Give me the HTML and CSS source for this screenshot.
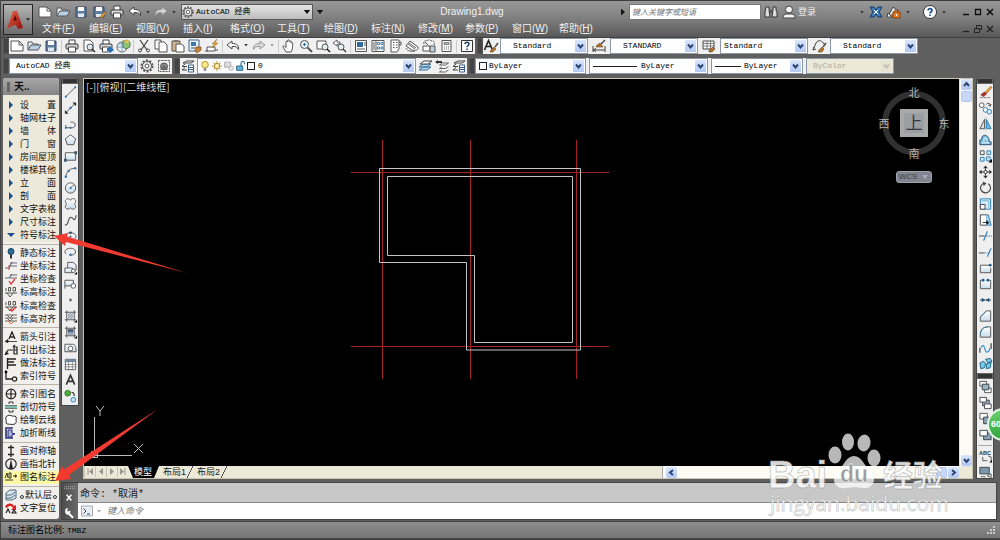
FILE: index.html
```html
<!DOCTYPE html>
<html lang="zh-CN">
<head>
<meta charset="utf-8">
<meta name="viewport" content="width=device-width, initial-scale=1">
<title>Drawing1.dwg</title>
<link rel="stylesheet" href="styles.css">
</head>
<body>
<svg class="sprite" aria-hidden="true">
  <defs>
    <linearGradient id="gBlue" x1="0" y1="0" x2="0" y2="1"><stop offset="0" stop-color="#fff"/><stop offset="1" stop-color="#c9dcec"/></linearGradient>
    <linearGradient id="gRed" x1="0" y1="0" x2="1" y2="1"><stop offset="0" stop-color="#f0654a"/><stop offset="1" stop-color="#8e0f0a"/></linearGradient>
  </defs>
  <!-- file and edit -->
  <symbol id="new" viewBox="0 0 16 16"><path d="M2 3h8l4 4v6H2z" fill="#fff" stroke="#555"/><path d="M10 3v4h4" fill="none" stroke="#555"/></symbol>
  <symbol id="open" viewBox="0 0 16 16"><path d="M2 12V4h4l1 2h5v2" fill="#e8eef4" stroke="#555"/><path d="M2 12l3-5h10l-3 5z" fill="#b9d2e6" stroke="#555"/></symbol>
  <symbol id="save" viewBox="0 0 16 16"><path d="M3 3h10v10H3z" fill="#5f7ea0" stroke="#33455c"/><path d="M5 3h6v4H5z" fill="#fff"/><path d="M5 9.500h6V13H5z" fill="#dfe8f0"/></symbol>
  <symbol id="saveas" viewBox="0 0 16 16"><path d="M3 3h10v10H3z" fill="#5f7ea0" stroke="#33455c"/><path d="M5 3h6v4H5z" fill="#fff"/><path d="M5 10h6v3H5z" fill="#dfe8f0"/><path d="M9 13l4-5 2 1-4 5z" fill="#e9a43c" stroke="#7a4b10" stroke-width=".6"/></symbol>
  <symbol id="print" viewBox="0 0 16 16"><path d="M5 6V2h6v4" fill="#fff" stroke="#444"/><rect x="2" y="6" width="12" height="5" rx="1" fill="#d9d9d9" stroke="#333"/><path d="M4.500 9h7v5h-7z" fill="#fff" stroke="#444"/></symbol>
  <symbol id="preview" viewBox="0 0 16 16"><path d="M3 2h6l3 3v8H3z" fill="#fff" stroke="#555"/><circle cx="9" cy="9" r="3" fill="#dcebf5" stroke="#555"/><path d="M11 11l3 3" stroke="#333" stroke-width="1.500"/></symbol>
  <symbol id="publish" viewBox="0 0 16 16"><use href="#print"/><path d="M9 10h3V8l4 4-4 3v-2H9z" fill="#2470b8"/></symbol>
  <symbol id="globe3d" viewBox="0 0 16 16"><circle cx="7" cy="9" r="5" fill="#eef5fa" stroke="#666"/><path d="M3 6h8M2 9h10M7 4v10" stroke="#5a8fb8" stroke-width=".8"/><path d="M8 3l4-1 3 2v5l-4 2-3-2z" fill="#8fc37a" stroke="#3f6d35" stroke-width=".8"/><path d="M8 3l4 2 3-1-3-2z" fill="#f0c050"/></symbol>
  <symbol id="cut" viewBox="0 0 16 16"><path d="M4 2l7 10M12 2L5 12" stroke="#444" stroke-width="1.300"/><circle cx="4" cy="12.500" r="1.500" fill="none" stroke="#444"/><circle cx="12" cy="12.500" r="1.500" fill="none" stroke="#444"/></symbol>
  <symbol id="copyc" viewBox="0 0 16 16"><path d="M2 2h6v9H2z" fill="#fff" stroke="#555"/><path d="M6 4h5l3 3v7H6z" fill="#fff" stroke="#555"/></symbol>
  <symbol id="paste" viewBox="0 0 16 16"><path d="M2 3h8v10H2z" fill="#d2b48c" stroke="#555"/><path d="M4 2h4v2H4z" fill="#777"/><path d="M6 6h5l3 2v6H6z" fill="#fff" stroke="#555"/></symbol>
  <symbol id="match" viewBox="0 0 16 16"><path d="M2 2h10v11H2z" fill="#eef4f8" stroke="#3f6489"/><path d="M4 4h5v4H4z" fill="#3f78ad"/><path d="M4 10h4" stroke="#444"/><path d="M9 9h5v3l-4 3-2-2z" fill="#c98237" stroke="#653b13" stroke-width=".6"/></symbol>
  <symbol id="blockedit" viewBox="0 0 16 16"><path d="M3 9h8v4H3z" fill="#fff" stroke="#555"/><path d="M1 13h3M11 12h3" stroke="#555"/><path d="M13 1l-5 5 3 0-3 4 6-5h-3z" fill="#efb13a" stroke="#8c5e10" stroke-width=".5"/></symbol>
  <symbol id="undo" viewBox="0 0 16 16"><path d="M2 7l5-4v2.500c5 0 7 2 6.500 6-1-2.500-3-3.300-6.500-3V11z" fill="#fff" stroke="#444"/></symbol>
  <symbol id="redo" viewBox="0 0 16 16"><path d="M14 7L9 3v2.500c-5 0-7 2-6.500 6 1-2.500 3-3.300 6.500-3V11z" fill="#d8d8d8" stroke="#999"/></symbol>
  <symbol id="pan" viewBox="0 0 16 16"><path d="M5 14L2 9c-.5-1 .7-1.500 1.500-.8L5 9.500V4c0-1.200 1.500-1.200 1.600 0V2.800c0-1.200 1.600-1.200 1.700 0V3.500c.1-1 1.600-1 1.700.1V5c.3-.9 1.600-.8 1.600.2 0 3.500.2 6-1.600 8.800z" fill="#fff" stroke="#444" stroke-width=".9"/></symbol>
  <symbol id="zoomrt" viewBox="0 0 16 16"><circle cx="6.500" cy="6.500" r="4" fill="#e4eff6" stroke="#555"/><path d="M5 6.500h3M6.500 5v3" stroke="#2c6aa0"/><path d="M9.500 9.500L14 14" stroke="#555" stroke-width="2"/></symbol>
  <symbol id="zoomwin" viewBox="0 0 16 16"><path d="M2 3h9v8H2z" fill="#fff" stroke="#555"/><circle cx="10" cy="9" r="3" fill="#e4eff6" stroke="#555"/><path d="M12 11l3 3" stroke="#222" stroke-width="1.600"/></symbol>
  <symbol id="zoomprev" viewBox="0 0 16 16"><path d="M1 5l4-3v2h3v2H5v2z" fill="#fff" stroke="#555" stroke-width=".9"/><circle cx="9" cy="9" r="3" fill="#e4eff6" stroke="#555"/><path d="M11 11l3 3" stroke="#444" stroke-width="1.600"/></symbol>
  <symbol id="props" viewBox="0 0 16 16"><path d="M2.500 2.500h11v11h-11z" fill="#fff" stroke="#555"/><path d="M4 4h6v5H4z" fill="#316a9f"/><path d="M4 11h8M11 5h2M11 7h2" stroke="#555"/></symbol>
  <symbol id="dcenter" viewBox="0 0 16 16"><path d="M2 2.500h12v11H2z" fill="#fff" stroke="#555"/><path d="M6 3v10" stroke="#555"/><path d="M3 5h2M3 7h2M3 9h2M3 11h2" stroke="#555"/><path d="M7.500 4.500h2v2h-2zM11 4.500h2v2h-2zM7.500 9h2v2h-2zM11 9h2v2h-2z" fill="none" stroke="#3b76a8" stroke-width=".9"/></symbol>
  <symbol id="palette" viewBox="0 0 16 16"><path d="M4 2h8v9l-2 3H4z" fill="#fff" stroke="#555"/><path d="M6 4.500h1.500M9 4.500h1.500M6 7h1.500M9 7h1.500M6 9.500h1.500M9 9.500h1.500M12 4h2v3h-2" stroke="#555" fill="none"/></symbol>
  <symbol id="sheets" viewBox="0 0 16 16"><path d="M2 8l4-5 8 6c1 3-3 4-6 3z" fill="#fff" stroke="#555"/><path d="M2 10c1 3 6 4 9 3M4 6l7 5M5 5l7 5" fill="none" stroke="#555" stroke-width=".9"/></symbol>
  <symbol id="markup" viewBox="0 0 16 16"><path d="M3 6c-1-3 2-4 3-3 2-2 4-1 4 0 3-1 4 2 3 4" fill="none" stroke="#555" stroke-dasharray="2 1"/><path d="M2 8h7v5H2z" fill="#fff" stroke="#555"/><path d="M9 8h5v6H9z" fill="#bcd2e4" stroke="#555"/><path d="M4 4l3 3" stroke="#555"/></symbol>
  <symbol id="calc" viewBox="0 0 16 16"><path d="M4 2.500h9v11H4z" fill="#f7f7f7" stroke="#555"/><path d="M6 4.500h5v2H6z" fill="#a6b7c6" stroke="#555" stroke-width=".6"/><path d="M6 9h5M6 11h5" stroke="#777" stroke-dasharray="1 1"/></symbol>
  <symbol id="help" viewBox="0 0 16 16"><path d="M2.500 2.500h11v11h-11z" fill="#fff" stroke="#333"/><path d="M6 6c0-2.500 4-2.500 4 0 0 1.500-2 1.500-2 3.200M8 10.500V12" fill="none" stroke="#1d3a63" stroke-width="1.500"/></symbol>
  <symbol id="tstyle" viewBox="0 0 16 16"><path d="M1.500 12L5.500 2.500 9.500 12M3 8.500h5" fill="none" stroke="#222" stroke-width="1.600"/><path d="M8 12l3-3 2 2-3 3H7z" fill="#b3722f" stroke="#5d3710" stroke-width=".5"/><path d="M12 9l3-4" stroke="#444" stroke-width="1.400"/></symbol>
  <symbol id="dstyle" viewBox="0 0 16 16"><path d="M2 8v6M14 8v6M2 12h12M2 12l3-1.500M2 12l3 1.500" stroke="#444"/><path d="M6 7l3-2 3 4H5z" fill="#b3722f" stroke="#5d3710" stroke-width=".5"/><path d="M10 6l4-4" stroke="#444" stroke-width="1.500"/></symbol>
  <symbol id="tblstyle" viewBox="0 0 16 16"><path d="M2 3h11v8H2z" fill="#fff" stroke="#444"/><path d="M2 5.500h11M2 8h11M6 3v8M9.500 3v8" stroke="#666" stroke-width=".8"/><path d="M8 12l4-3 2 2-3 3H8z" fill="#b3722f" stroke="#5d3710" stroke-width=".5"/></symbol>
  <symbol id="mlstyle" viewBox="0 0 16 16"><path d="M2 12l3-7c2-4 7-2 8 1M2 12l1-3M2 12l3-1" fill="none" stroke="#444"/><path d="M8 12l3-3 2 2-2 3H7z" fill="#b3722f" stroke="#5d3710" stroke-width=".5"/><path d="M12 9l3-4" stroke="#444" stroke-width="1.400"/></symbol>
  <symbol id="gear" viewBox="0 0 16 16"><circle cx="8" cy="8" r="5.500" fill="none" stroke="#555" stroke-width="2" stroke-dasharray="2 1.450"/><circle cx="8" cy="8" r="4.500" fill="#eee" stroke="#555"/><circle cx="8" cy="8" r="2" fill="#fff" stroke="#555"/></symbol>
  <symbol id="wsset" viewBox="0 0 16 16"><rect x="2.500" y="2.500" width="11" height="11" fill="none" stroke="#555" stroke-dasharray="2 1"/><circle cx="8" cy="8.500" r="3.500" fill="#888" stroke="#555"/><path d="M4 12l4-5 4 5z" fill="#666"/></symbol>
  <!-- layers -->
  <symbol id="layers" viewBox="0 0 16 16"><path d="M3 5l4-2h7l-3 2z" fill="#fff" stroke="#444"/><path d="M7 8.500H2L5 6M7 12H2l3-2.500" fill="none" stroke="#444"/><path d="M8.500 7h5v7h-5z" fill="#fff" stroke="#3a5d80"/><path d="M9 9.500h4M9 11.500h4" stroke="#3a5d80"/></symbol>
  <symbol id="laymake" viewBox="0 0 16 16"><path d="M2 12l4-3h8l-4 3zM2 9l4-3h8l-4 3z" fill="#b5dbf0" stroke="#3b6f96"/><path d="M3 6l4-3h8l-4 3z" fill="#fff" stroke="#444"/></symbol>
  <symbol id="layprev" viewBox="0 0 16 16"><path d="M5.500 7l3-2h6l-3 2zM5.500 10.500l2-1.500M11.500 10.500l3-2M5.500 10.500h6M5.500 14l2-1.500M5.500 14h6l3-2" fill="#fff" stroke="#555" stroke-width=".9"/><path d="M1 4l3-2v1h4v2H4v1z" fill="#333"/></symbol>
  <symbol id="bulb" viewBox="0 0 12 16"><circle cx="6" cy="6.500" r="3.800" fill="#fbe88e" stroke="#b38b1d"/><path d="M4.500 10.500h3v3h-3z" fill="#888"/></symbol>
  <symbol id="sun" viewBox="0 0 12 16"><path d="M6 2v12M0 8h12M2 4l8 8M10 4l-8 8" stroke="#b8862b"/><circle cx="6" cy="8" r="3" fill="#fff2a5" stroke="#a07c1a"/></symbol>
  <symbol id="vp" viewBox="0 0 12 16"><path d="M1 3.500h7v6H1z" fill="#ddd" stroke="#aaa"/><circle cx="8.500" cy="10.500" r="2.500" fill="#eee" stroke="#aaa"/></symbol>
  <symbol id="lock" viewBox="0 0 12 16"><path d="M6 8V5c0-3 4-3 4 0v1" fill="none" stroke="#356f9e" stroke-width="1.300"/><path d="M1 8h7v5H1z" fill="#64b5d9" stroke="#245c84"/></symbol>
  <!-- draw -->
  <symbol id="line" viewBox="0 0 16 16"><path d="M3 13L13 3" stroke="#555"/><circle cx="3" cy="13" r="1.200" fill="#3b76a8"/><circle cx="13" cy="3" r="1.200" fill="#3b76a8"/></symbol>
  <symbol id="xline" viewBox="0 0 16 16"><path d="M3 13L13 3" stroke="#444"/><path d="M2 14v-4l4 4zM14 2v4l-4-4z" fill="#333"/><circle cx="8" cy="8" r="1.300" fill="#3b76a8"/></symbol>
  <symbol id="pline" viewBox="0 0 16 16"><path d="M3 12h7c4 0 4-6 0-6H8" fill="none" stroke="#555"/><path d="M3 9v3" stroke="#555"/><circle cx="3" cy="12" r="1.200" fill="#3b76a8"/><circle cx="8" cy="12" r="1.200" fill="#3b76a8"/></symbol>
  <symbol id="poly" viewBox="0 0 16 16"><path d="M8 2.500l5.500 4-2 6.500h-7l-2-6.500z" fill="url(#gBlue)" stroke="#555"/></symbol>
  <symbol id="rect" viewBox="0 0 16 16"><path d="M2.500 4.500h11v8h-11z" fill="url(#gBlue)" stroke="#555"/><path d="M12 3h3v3h-3zM1 11h3v3H1z" fill="#3d5a75"/></symbol>
  <symbol id="arc" viewBox="0 0 16 16"><path d="M3 14c0-6 4-10 10-10" fill="none" stroke="#555"/><circle cx="3" cy="13" r="1.300" fill="#3b76a8"/><circle cx="6" cy="7" r="1.300" fill="#3b76a8"/><circle cx="13" cy="4" r="1.300" fill="#3b76a8"/></symbol>
  <symbol id="circle" viewBox="0 0 16 16"><circle cx="8" cy="8" r="5.500" fill="url(#gBlue)" stroke="#555"/><path d="M8 8l3.500-3.500" stroke="#555"/><circle cx="8" cy="8" r="1.200" fill="#3b76a8"/></symbol>
  <symbol id="cloud" viewBox="0 0 16 16"><path d="M8 4c1-3 6-2 5.500 1.500C13.300 7 12 8 12 8c3 2 1 6-1.500 5.500C9 13.500 8 12 8 12c-2 3-6 1-5.500-1.500C2.700 9 4 8 4 8 1 6 3 2 5.500 2.500 7 2.700 8 4 8 4z" fill="url(#gBlue)" stroke="#555"/></symbol>
  <symbol id="spline" viewBox="0 0 16 16"><path d="M2 13c2 1 3-1 4-5s4-3 5-1 3-1 3-4" fill="none" stroke="#555" stroke-width="1.200"/></symbol>
  <symbol id="ellipse" viewBox="0 0 16 16"><ellipse cx="8" cy="8.500" rx="6" ry="4" fill="url(#gBlue)" stroke="#555"/><circle cx="8" cy="4.500" r="1.400" fill="#345"/><circle cx="8" cy="8.500" r="1" fill="#345"/></symbol>
  <symbol id="earc" viewBox="0 0 16 16"><path d="M3 10C0 6 5 4 8 4c6 0 7 5 3 7H8" fill="none" stroke="#555"/><circle cx="8" cy="11" r="1.400" fill="#3b76a8"/></symbol>
  <symbol id="insert" viewBox="0 0 16 16"><path d="M5 2h6l3 3v5H5z" fill="#eef" stroke="#555"/><path d="M2 8h8v5H2z" fill="url(#gBlue)" stroke="#555"/><circle cx="11" cy="11" r="2" fill="#fff" stroke="#555"/><path d="M15 12v3h-3z"/></symbol>
  <symbol id="block" viewBox="0 0 16 16"><path d="M2 4h9v6H2z" fill="url(#gBlue)" stroke="#555"/><circle cx="11" cy="10" r="2.500" fill="#fff" stroke="#555"/><path d="M2 10v3" stroke="#555"/></symbol>
  <symbol id="point" viewBox="0 0 16 16"><circle cx="8" cy="8" r="1.500" fill="#667"/></symbol>
  <symbol id="hatch" viewBox="0 0 16 16"><path d="M2 4h12M2 12h12M4 2v12M12 2v12" stroke="#555"/><path d="M5 5h6v6H5z" fill="#cdd6de"/><path d="M5 8l3-3M5 11l6-6M8 11l3-3" stroke="#567" stroke-width=".8"/><path d="M15 12v3h-3z"/></symbol>
  <symbol id="grad" viewBox="0 0 16 16"><path d="M2 4h12M2 12h12M4 2v12M12 2v12" stroke="#555"/><path d="M5 5h6v6H5z" fill="#8fa1b2"/><path d="M5 5h6v3H5z" fill="#4b6175"/><path d="M15 12v3h-3z"/></symbol>
  <symbol id="region" viewBox="0 0 16 16"><path d="M2 4h8c3 0 4 3 4 8H2z" fill="url(#gBlue)" stroke="#555"/><circle cx="8" cy="8.500" r="2.500" fill="#fff" stroke="#555"/></symbol>
  <symbol id="table" viewBox="0 0 16 16"><path d="M2.500 3h11v11h-11z" fill="#fff" stroke="#555"/><path d="M2 3h12v3H2z" fill="#6f8aa3"/><path d="M2.500 8.500h11M2.500 11h11M6 5v9M10 5v9" stroke="#777" stroke-width=".8"/></symbol>
  <symbol id="mtext" viewBox="0 0 16 16"><path d="M3.500 13L8 3l4.500 10M5.500 9.500h5" fill="none" stroke="#333" stroke-width="1.700"/></symbol>
  <symbol id="addsel" viewBox="0 0 16 16"><circle cx="5" cy="5" r="3" fill="#4caf3e" stroke="#2c6f24"/><path d="M9 4c2 0 3 1 3 4" stroke="#333" fill="none" stroke-width="1.300"/><circle cx="11" cy="12" r="2.500" fill="#c6e2f4" stroke="#2f7fb5"/></symbol>
  <!-- modify -->
  <symbol id="erase" viewBox="0 0 16 16"><path d="M2 14h12" stroke="#777" stroke-dasharray="3 1"/><path d="M7 9l6-7 2 1-6 7z" fill="#e7a04a" stroke="#8c5a1c" stroke-width=".6"/><path d="M3 11l4-3 2 2-3 3z" fill="#a33" stroke="#711" stroke-width=".6"/></symbol>
  <symbol id="copy" viewBox="0 0 16 16"><circle cx="4" cy="5" r="2.500" fill="#fff" stroke="#555"/><path d="M9 4c2-2 4-1 4 1M13 6l-2-1M13 6l1-2" fill="none" stroke="#333"/><circle cx="8" cy="10" r="2.500" fill="#fff" stroke="#2f7fb5"/><circle cx="12" cy="12" r="2.500" fill="#d6ebf7" stroke="#2f7fb5"/></symbol>
  <symbol id="mirror" viewBox="0 0 16 16"><path d="M7 3v10H2z" fill="#ddd" stroke="#555"/><path d="M9 3v10h5z" fill="#6cb8e0" stroke="#2f7fb5"/><path d="M8 1v14" stroke="#999" stroke-dasharray="2 1" stroke-width=".7"/></symbol>
  <symbol id="offset" viewBox="0 0 16 16"><path d="M2 13h12v-3h-2c0-9-9-9-8-2H2z" fill="#7cc0e4" stroke="#2a4a66"/><path d="M4 11h8M6 9c0-4 4-4 4 0" fill="none" stroke="#fff"/></symbol>
  <symbol id="array" viewBox="0 0 16 16"><path d="M2.500 2.500h4v4h-4z" fill="#fff" stroke="#444"/><path d="M9.500 2.500h4v4h-4zM2.500 9.500h4v4h-4z" fill="#cde8f6" stroke="#2f7fb5"/><path d="M9 9h4v4H9z" fill="#cde8f6" stroke="#2f7fb5"/><path d="M15 11v4h-4z"/></symbol>
  <symbol id="move" viewBox="0 0 16 16"><path d="M8 1l2.500 3h-5zM8 15l2.500-3h-5zM1 8l3-2.500v5zM15 8l-3-2.500v5z" fill="#333"/><path d="M8 4v8M4 8h8" stroke="#333"/><circle cx="8" cy="8" r="1.700" fill="#fff" stroke="#333"/></symbol>
  <symbol id="rotate" viewBox="0 0 16 16"><path d="M6 3a5.300 5.300 0 1 0 5 .5" fill="none" stroke="#444" stroke-width="1.200"/><path d="M5 1l4 2-3 3z" fill="#444"/></symbol>
  <symbol id="scale" viewBox="0 0 16 16"><path d="M2.500 2.500h11v11h-11z" fill="#d5ecf8" stroke="#2f7fb5"/><path d="M2.500 8.500h5v5h-5z" fill="#fff" stroke="#444"/><path d="M4 4.500h7.500V12" fill="none" stroke="#6eb5dc"/></symbol>
  <symbol id="stretch" viewBox="0 0 16 16"><path d="M9 2.500h2l3 11H9z" fill="#a6d8f0" stroke="#2f7fb5"/><path d="M9 2.500H2.500v11H9" fill="#fff" stroke="#444"/><path d="M5 10h4V8l3 3-3 2v-2H5z"/></symbol>
  <symbol id="trim" viewBox="0 0 16 16"><path d="M6 13L10 3" stroke="#2f7fb5" stroke-width="1.200"/><path d="M1 8h6" stroke="#444"/><path d="M8 8h7" stroke="#2f7fb5" stroke-dasharray="2 1"/></symbol>
  <symbol id="extend" viewBox="0 0 16 16"><path d="M10 13L14 4" stroke="#2f7fb5" stroke-width="1.200"/><path d="M1 9h6" stroke="#444"/><path d="M7 9h5" stroke="#2f7fb5" stroke-dasharray="1 1"/></symbol>
  <symbol id="brkpt" viewBox="0 0 16 16"><path d="M12 5H2.500v8h11V8" fill="url(#gBlue)" stroke="#555"/><circle cx="13" cy="5" r="1.500" fill="#1d5e96"/></symbol>
  <symbol id="brk" viewBox="0 0 16 16"><path d="M5 4H2.500v9h11V4H11" fill="url(#gBlue)" stroke="#555"/><circle cx="5.500" cy="4" r="1.500" fill="#1d5e96"/><circle cx="10.500" cy="4" r="1.500" fill="#1d5e96"/></symbol>
  <symbol id="join" viewBox="0 0 16 16"><path d="M2 8h12" stroke="#444"/><path d="M4 5.500L7.500 8 4 10.500zM12 5.500L8.500 8l3.500 2.500z" fill="#1d4e76"/></symbol>
  <symbol id="chamfer" viewBox="0 0 16 16"><path d="M2.500 13.500V9l6.500-6.500h4.500v11z" fill="url(#gBlue)" stroke="#555"/><path d="M2.500 9L9 2.500" stroke="#2f7fb5"/></symbol>
  <symbol id="fillet" viewBox="0 0 16 16"><path d="M2.500 13.500V11c0-5 3-8.500 8-8.500h3v11z" fill="url(#gBlue)" stroke="#555"/><path d="M2.500 11c0-5 3-8.500 8-8.500" fill="none" stroke="#2f7fb5"/></symbol>
  <symbol id="blend" viewBox="0 0 16 16"><path d="M2 13V8M14 9V3" stroke="#444" stroke-width="1.300"/><path d="M3 8c3-6 4 0 5 3s4 1 5-3" fill="none" stroke="#2f8fcf" stroke-width="1.200"/></symbol>
  <symbol id="explode" viewBox="0 0 16 16"><path d="M2 7l4-2 2 2-1 5-4 1zM8 3l5-1 2 3-4 2zM9 8l5-2-1 6-4 1z" fill="#7cc8e8" stroke="#1b6287"/></symbol>
  <symbol id="front" viewBox="0 0 16 16"><path d="M2 2h7v5H2zM7 9h7v5H7z" fill="#fff" stroke="#555"/><path d="M4.500 5h7v6h-7z" fill="#9fb4c6" stroke="#344"/></symbol>
  <symbol id="back" viewBox="0 0 16 16"><path d="M5 5h7v6H5z" fill="#9fb4c6" stroke="#344"/><path d="M2 2h7v5H2zM7 9h7v5H7z" fill="#fff" stroke="#445"/></symbol>
  <symbol id="above" viewBox="0 0 16 16"><path d="M2 2h8v6H2z" fill="#fff" stroke="#555"/><path d="M6 6h8v7H6z" fill="#8ba2b6" stroke="#344"/></symbol>
  <symbol id="under" viewBox="0 0 16 16"><path d="M6 6h8v7H6z" fill="#8ba2b6" stroke="#344"/><path d="M2 3h8v6H2z" fill="#fff" stroke="#344"/></symbol>
  <symbol id="hatchback" viewBox="0 0 16 16"><path d="M2 3h10v7H2z" fill="#7e97ac" stroke="#344"/><path d="M3 13h5M10 12l4-2v4z" stroke="#555" fill="#fff"/></symbol>
  <!-- palette commands -->
  <symbol id="tri" viewBox="0 0 14 12"><path d="M5 2l4 4-4 4z" fill="#1f4e8c"/></symbol>
  <symbol id="trid" viewBox="0 0 14 12"><path d="M3 4h8L7 8z" fill="#1f4e8c"/></symbol>
  <symbol id="p-bulb" viewBox="0 0 14 12"><circle cx="7" cy="4.500" r="3" fill="#2d6f9c" stroke="#163c58"/><path d="M6 8h2v3.500H6z" fill="#333"/></symbol>
  <symbol id="p-coord" viewBox="0 0 14 12"><path d="M1 8h4l3-6M6 3h7M6 6h7" fill="none" stroke="#667" stroke-width="1.100"/><path d="M5 5v5" stroke="#b44"/></symbol>
  <symbol id="p-coordc" viewBox="0 0 14 12"><path d="M1 5h4l3-4M6 2h7M6 5h7" fill="none" stroke="#667" stroke-width="1.100"/><path d="M5 8l2 3 4-5" fill="none" stroke="#d33" stroke-width="1.300"/></symbol>
  <symbol id="p-elev" viewBox="0 0 14 12"><path d="M2 2v3M4.500 1.500h2v3.500h-2zM9 1.500h2.500v3.500H9zM1 7h12M3 7l3 4 3-4" fill="none" stroke="#444" stroke-width=".9"/></symbol>
  <symbol id="p-elevc" viewBox="0 0 14 12"><path d="M2 2v3M4.500 1.500h2v3.500h-2zM9 1.500h2.500v3.500H9zM1 7h12M3 7l3 4 3-4" fill="none" stroke="#444" stroke-width=".9"/><path d="M6 9l2 2 4-4" fill="none" stroke="#d33" stroke-width="1.400"/></symbol>
  <symbol id="p-align" viewBox="0 0 14 12"><path d="M1 2h12M1 5h12M1 8h12M3 2l3 3 3-3M3 5l3 3 3-3" fill="none" stroke="#555" stroke-width=".9"/><path d="M4 8l3 3 3-3" fill="none" stroke="#d63"/></symbol>
  <symbol id="p-arrow" viewBox="0 0 14 12"><path d="M5 8l3-7 3 7M6 6h4" fill="none" stroke="#222" stroke-width="1.300"/><path d="M3 10.500h10M1 10.500l3-2v3z" stroke="#222" fill="#222" stroke-width=".8"/></symbol>
  <symbol id="p-lead" viewBox="0 0 14 12"><path d="M1 11l3-5h5M10 3h3v7h-3zM10 6h3M9 3l2-2" fill="none" stroke="#222" stroke-width="1.200"/><path d="M1 11l1-4 3 3z" fill="#222"/></symbol>
  <symbol id="p-make" viewBox="0 0 14 12"><path d="M3.500 1v11M3 2h9M3 5h7M3 8h9" stroke="#222" stroke-width="1.400"/></symbol>
  <symbol id="p-index" viewBox="0 0 14 12"><path d="M2 1v8h6" fill="none" stroke="#222" stroke-width="1.300"/><circle cx="10.500" cy="9" r="2.200" fill="none" stroke="#222" stroke-width="1.200"/><circle cx="2" cy="2" r="1.400"/></symbol>
  <symbol id="p-cross" viewBox="0 0 14 12"><circle cx="7" cy="6" r="4.800" fill="none" stroke="#222" stroke-width="1.200"/><path d="M2 6h10M7 1v10" stroke="#222" stroke-width="1.200"/></symbol>
  <symbol id="p-cut" viewBox="0 0 14 12"><path d="M1 6h12" stroke="#7fbfae" stroke-width="3"/><path d="M1 4.500h12M1 7.500h12" stroke="#555" stroke-width=".7"/><path d="M5 3V1h4v2M5 9v2h4V9" fill="none" stroke="#333"/></symbol>
  <symbol id="p-cloud" viewBox="0 0 14 12"><path d="M3 2c3-2 5 1 8 0 2 1 1 3 1 4 1 3-1 3-1 4-3 1-5 0-8 0-2-1 0-3-1-4 0-1-1-3 1-4z" fill="#fff" stroke="#333"/></symbol>
  <symbol id="p-brk" viewBox="0 0 14 12"><path d="M9 1H2v10h7" fill="none" stroke="#2a2f77" stroke-width="1.600"/><path d="M4 3h4v3l3 1-3 1v2H4z" fill="#a9b1d8" stroke="#2a2f77"/></symbol>
  <symbol id="p-sym" viewBox="0 0 14 12"><path d="M7 0v12M4 2.500h6M4 9.500h6" stroke="#222" stroke-width="1.300"/></symbol>
  <symbol id="p-north" viewBox="0 0 14 12"><circle cx="7" cy="6" r="5.200" fill="none" stroke="#222" stroke-width="1.200"/><path d="M7 1l2 10H5z" fill="#222"/></symbol>
  <symbol id="p-name" viewBox="0 0 14 12"><path d="M1 7l2-5 1 5M5 2v5h2V2zM1 9h8M9 5h4" fill="none" stroke="#333"/><path d="M11 3l2 2-2 2z" fill="#333"/></symbol>
  <symbol id="p-layer" viewBox="0 0 14 12"><path d="M2 4l4-3h6v8l-4 2H2z" fill="#dce6ee" stroke="#4d6980"/><path d="M2 6h5l4-3M2 9h5l4-3" fill="none" stroke="#4d6980"/></symbol>
  <symbol id="p-reset" viewBox="0 0 14 12"><path d="M1 5c1-4 7-5 9-1l2-1v5H7l2-2C7 3 4 4 3 6z" fill="#d22"/><path d="M2 11l2-4 2 4M8 11l2-3 2 3z" fill="none" stroke="#222" stroke-width="1.200"/></symbol>
</svg>

<div class="app">
  <header class="titlebar">
    <button class="logo" type="button" aria-label="应用程序菜单">
      <svg class="logo-mark" viewBox="0 0 18 20"><path d="M1 19L7 1h4l6 17-5 1-2-4c-3 0-5 2-9 4z" fill="url(#gRed)"/><path d="M7 11l2-6 2 5z" fill="#5c0a06"/></svg>
      <span class="caret"></span>
    </button>
    <div class="title-main">
      <div class="title-row">
        <div class="quick">
          <button type="button" aria-label="新建"><svg class="ico"><use href="#new"/></svg></button>
          <button type="button" aria-label="打开"><svg class="ico"><use href="#open"/></svg></button>
          <button type="button" aria-label="保存"><svg class="ico"><use href="#save"/></svg></button>
          <button type="button" aria-label="另存为"><svg class="ico"><use href="#saveas"/></svg></button>
          <button type="button" aria-label="打印"><svg class="ico"><use href="#print"/></svg></button>
          <button type="button" aria-label="放弃"><svg class="ico"><use href="#undo"/></svg></button>
          <span class="caret"></span>
          <button type="button" aria-label="重做"><svg class="ico"><use href="#redo"/></svg></button>
          <span class="caret"></span>
          <div class="combo combo-title">
            <select aria-label="工作空间"><option>AutoCAD 经典</option></select>
            <svg class="ico combo-lead"><use href="#gear"/></svg>
            <span class="caret big"></span>
          </div>
          <span class="caret big"></span>
        </div>
        <h1 class="doc">Drawing1.dwg</h1>
        <div class="info">
          <span class="play"></span>
          <input class="search" type="text" placeholder="键入关键字或短语" aria-label="搜索">
          <button type="button" aria-label="查找"><svg class="ico" viewBox="0 0 16 16"><path d="M3 3h3v3l1 7H2V8zM10 3h3v3l1 2v5H9l1-7z" fill="#ddd" stroke="#333"/><path d="M7 6h2v3H7z" fill="#555"/></svg></button>
          <button class="login" type="button"><svg class="ico" viewBox="0 0 16 16"><circle cx="8" cy="5.500" r="3.500" fill="#f4f4f4" stroke="#444"/><path d="M2 14c0-4 3-4 6-4s6 0 6 4z" fill="#f4f4f4" stroke="#444"/></svg>登录</button>
          <span class="caret gap"></span>
          <button type="button" aria-label="Exchange"><svg class="ico" viewBox="0 0 16 16"><path d="M2 3h4l2 3 2-3h4l-3 5 3 5h-4l-2-3-2 3H2l3-5z" fill="#3e7fc1" stroke="#163a66"/><path d="M6 6l4 4M10 6l-4 4" stroke="#fff"/></svg></button>
          <button type="button" aria-label="联机"><svg class="ico" viewBox="0 0 16 16"><path d="M2 12l5-9 5 4" fill="#ddd" stroke="#444"/><path d="M2 9l4 4H1z" fill="#fff" stroke="#444"/><path d="M7 8h7v6H7z" fill="#e8791e" stroke="#8c3f05"/><path d="M9 8V6h3v2" fill="none" stroke="#8c3f05"/><path d="M10 10h1v2h-1z" fill="#fff"/></svg></button>
          <span class="caret"></span>
          <button class="helpbtn" type="button" aria-label="帮助"><svg class="ico" viewBox="0 0 16 16"><circle cx="8" cy="8" r="6.500" fill="#fff" stroke="#333"/><path d="M6 6.500c0-2.500 4-2.500 4 0 0 1.500-2 1.500-2 3M8 10.500V12" fill="none" stroke="#1c4f94" stroke-width="1.700"/></svg></button>
          <span class="caret"></span>
          <div class="winbtns">
            <button type="button" aria-label="最小化"><svg viewBox="0 0 8 8"><path d="M1 6.500h6" stroke="#111" stroke-width="1.500"/></svg></button>
            <button type="button" aria-label="最大化"><svg viewBox="0 0 8 8"><path d="M1.500 1.500h5v5h-5z" fill="none" stroke="#111" stroke-width="1.300"/></svg></button>
            <button type="button" aria-label="关闭"><svg viewBox="0 0 8 8"><path d="M1 1l6 6M7 1L1 7" stroke="#111" stroke-width="1.600"/></svg></button>
          </div>
        </div>
      </div>
      <div class="menu-row">
        <nav class="menu">
          <a href="#">文件(<u>F</u>)</a><a href="#">编辑(<u>E</u>)</a><a href="#">视图(<u>V</u>)</a><a href="#">插入(<u>I</u>)</a><a href="#">格式(<u>O</u>)</a><a href="#">工具(<u>T</u>)</a><a href="#">绘图(<u>D</u>)</a><a href="#">标注(<u>N</u>)</a><a href="#">修改(<u>M</u>)</a><a href="#">参数(<u>P</u>)</a><a href="#">窗口(<u>W</u>)</a><a href="#">帮助(<u>H</u>)</a>
        </nav>
        <div class="winbtns">
          <button type="button" aria-label="最小化图形"><svg viewBox="0 0 8 8"><path d="M1 6.500h6" stroke="#222" stroke-width="1.300"/></svg></button>
          <button type="button" aria-label="还原图形"><svg viewBox="0 0 8 8"><path d="M2.500 3V.5h5v4H5.500M.5 3.500h5v4h-5z" fill="none" stroke="#222"/></svg></button>
          <button type="button" aria-label="关闭图形"><svg viewBox="0 0 8 8"><path d="M1 1l6 6M7 1L1 7" stroke="#222" stroke-width="1.400"/></svg></button>
        </div>
      </div>
    </div>
  </header>

  <div class="bar">
    <div class="grip"></div>
    <div class="tools w-std">
      <svg class="ico"><use href="#new"/></svg><svg class="ico"><use href="#open"/></svg><svg class="ico"><use href="#save"/></svg><i class="sep"></i>
      <svg class="ico"><use href="#print"/></svg><svg class="ico"><use href="#preview"/></svg><svg class="ico"><use href="#publish"/></svg><svg class="ico"><use href="#globe3d"/></svg><i class="sep"></i>
      <svg class="ico"><use href="#cut"/></svg><svg class="ico"><use href="#copyc"/></svg><svg class="ico"><use href="#paste"/></svg><svg class="ico"><use href="#match"/></svg><svg class="ico"><use href="#blockedit"/></svg><i class="sep"></i>
      <svg class="ico"><use href="#undo"/></svg><span class="caret"></span><svg class="ico"><use href="#redo"/></svg><span class="caret dim"></span><i class="sep"></i>
      <svg class="ico"><use href="#pan"/></svg><svg class="ico"><use href="#zoomrt"/></svg><svg class="ico"><use href="#zoomwin"/></svg><svg class="ico"><use href="#zoomprev"/></svg><i class="sep"></i>
      <svg class="ico"><use href="#props"/></svg><svg class="ico"><use href="#dcenter"/></svg><svg class="ico"><use href="#palette"/></svg><svg class="ico"><use href="#sheets"/></svg><svg class="ico"><use href="#markup"/></svg><svg class="ico"><use href="#calc"/></svg><i class="sep"></i>
      <svg class="ico"><use href="#help"/></svg>
    </div>
    <div class="grip"></div>
    <div class="tools">
      <svg class="ico"><use href="#tstyle"/></svg>
      <div class="combo w-style inset"><select aria-label="文字样式"><option>Standard</option></select><svg class="chev" viewBox="0 0 11 12"><path d="M3 4.500l2.500 3 2.500-3"/></svg></div>
      <svg class="ico mid"><use href="#dstyle"/></svg>
      <div class="combo w-style inset"><select aria-label="标注样式"><option>STANDARD</option></select><svg class="chev" viewBox="0 0 11 12"><path d="M3 4.500l2.500 3 2.500-3"/></svg></div>
      <svg class="ico mid"><use href="#tblstyle"/></svg>
      <div class="combo w-style"><select aria-label="表格样式"><option>Standard</option></select><svg class="chev" viewBox="0 0 11 12"><path d="M3 4.500l2.500 3 2.500-3"/></svg></div>
      <svg class="ico mid"><use href="#mlstyle"/></svg>
      <div class="combo w-style inset"><select aria-label="多重引线样式"><option>Standard</option></select><svg class="chev" viewBox="0 0 11 12"><path d="M3 4.500l2.500 3 2.500-3"/></svg></div>
    </div>
  </div>

  <div class="bar">
    <div class="grip"></div>
    <div class="tools w-ws">
      <div class="combo w-space"><select aria-label="工作空间"><option>AutoCAD 经典</option></select><svg class="chev" viewBox="0 0 11 12"><path d="M3 4.500l2.500 3 2.500-3"/></svg></div>
      <svg class="ico"><use href="#gear"/></svg><svg class="ico"><use href="#wsset"/></svg>
    </div>
    <div class="grip"></div>
    <div class="tools w-layer">
      <svg class="ico"><use href="#layers"/></svg>
      <div class="combo w-layers">
        <select aria-label="图层"><option>0</option></select>
        <span class="layer-state"><svg><use href="#bulb"/></svg><svg><use href="#sun"/></svg><svg><use href="#vp"/></svg><svg><use href="#lock"/></svg><i class="swatch"></i></span>
        <svg class="chev" viewBox="0 0 11 12"><path d="M3 4.500l2.500 3 2.500-3"/></svg>
      </div>
      <svg class="ico"><use href="#laymake"/></svg><svg class="ico"><use href="#layprev"/></svg><svg class="ico"><use href="#layers"/></svg>
    </div>
    <div class="grip"></div>
    <div class="tools props">
      <div class="combo w-color"><select aria-label="颜色"><option>ByLayer</option></select><i class="swatch"></i><svg class="chev" viewBox="0 0 11 12"><path d="M3 4.500l2.500 3 2.500-3"/></svg></div>
      <div class="combo w-ltype"><select aria-label="线型"><option>ByLayer</option></select><i class="rule"></i><svg class="chev" viewBox="0 0 11 12"><path d="M3 4.500l2.500 3 2.500-3"/></svg></div>
      <div class="combo w-lweight"><select aria-label="线宽"><option>ByLayer</option></select><i class="rule"></i><svg class="chev" viewBox="0 0 11 12"><path d="M3 4.500l2.500 3 2.500-3"/></svg></div>
      <div class="combo w-plot"><select aria-label="打印样式" disabled><option>ByColor</option></select><svg class="chev" viewBox="0 0 11 12"><path d="M3 4.500l2.500 3 2.500-3"/></svg></div>
    </div>
  </div>

  <main class="body">
    <aside class="palette">
      <div class="palette-head"><i></i>天..</div>
      <div class="group g11">
        <button type="button"><svg><use href="#tri"/></svg><span class="wide">设 置</span></button>
        <button type="button"><svg><use href="#tri"/></svg><span>轴网柱子</span></button>
        <button type="button"><svg><use href="#tri"/></svg><span class="wide">墙 体</span></button>
        <button type="button"><svg><use href="#tri"/></svg><span class="wide">门 窗</span></button>
        <button type="button"><svg><use href="#tri"/></svg><span>房间屋顶</span></button>
        <button type="button"><svg><use href="#tri"/></svg><span>楼梯其他</span></button>
        <button type="button"><svg><use href="#tri"/></svg><span class="wide">立 面</span></button>
        <button type="button"><svg><use href="#tri"/></svg><span class="wide">剖 面</span></button>
        <button type="button"><svg><use href="#tri"/></svg><span>文字表格</span></button>
        <button type="button"><svg><use href="#tri"/></svg><span>尺寸标注</span></button>
        <button type="button"><svg><use href="#trid"/></svg><span>符号标注</span></button>
      </div>
      <div class="group g6">
        <button type="button"><svg><use href="#p-bulb"/></svg><span>静态标注</span></button>
        <button type="button"><svg><use href="#p-coord"/></svg><span>坐标标注</span></button>
        <button type="button"><svg><use href="#p-coordc"/></svg><span>坐标检查</span></button>
        <button type="button"><svg><use href="#p-elev"/></svg><span>标高标注</span></button>
        <button type="button"><svg><use href="#p-elevc"/></svg><span>标高检查</span></button>
        <button type="button"><svg><use href="#p-align"/></svg><span>标高对齐</span></button>
      </div>
      <div class="group g4">
        <button type="button"><svg><use href="#p-arrow"/></svg><span>箭头引注</span></button>
        <button type="button"><svg><use href="#p-lead"/></svg><span>引出标注</span></button>
        <button type="button"><svg><use href="#p-make"/></svg><span>做法标注</span></button>
        <button type="button"><svg><use href="#p-index"/></svg><span>索引符号</span></button>
      </div>
      <div class="group g4">
        <button type="button"><svg><use href="#p-cross"/></svg><span>索引图名</span></button>
        <button type="button"><svg><use href="#p-cut"/></svg><span>剖切符号</span></button>
        <button type="button"><svg><use href="#p-cloud"/></svg><span>绘制云线</span></button>
        <button type="button"><svg><use href="#p-brk"/></svg><span>加折断线</span></button>
      </div>
      <div class="group g3">
        <button type="button"><svg><use href="#p-sym"/></svg><span>画对称轴</span></button>
        <button type="button"><svg><use href="#p-north"/></svg><span>画指北针</span></button>
        <button class="hot" type="button"><svg><use href="#p-name"/></svg><span>图名标注</span></button>
      </div>
      <div class="group g2">
        <button type="button"><svg><use href="#p-layer"/></svg><span class="dots"><i></i>默认层<i></i></span></button>
        <button type="button"><svg><use href="#p-reset"/></svg><span>文字复位</span></button>
      </div>
    </aside>

    <div class="work">
      <div class="stage">
        <div class="vbars left">
          <div class="vgrip"></div>
          <div class="vtools">
            <svg><use href="#line"/></svg><svg><use href="#xline"/></svg><svg><use href="#pline"/></svg><svg><use href="#poly"/></svg><svg><use href="#rect"/></svg><svg><use href="#arc"/></svg><svg><use href="#circle"/></svg><svg><use href="#cloud"/></svg><svg><use href="#spline"/></svg><svg><use href="#ellipse"/></svg><svg><use href="#earc"/></svg><svg><use href="#insert"/></svg><svg><use href="#block"/></svg><svg><use href="#point"/></svg><svg><use href="#hatch"/></svg><svg><use href="#grad"/></svg><svg><use href="#region"/></svg><svg><use href="#table"/></svg><svg><use href="#mtext"/></svg><svg><use href="#addsel"/></svg>
          </div>
        </div>

        <section class="frame">
          <div class="canvas">
            <div class="view-label">[-][俯视][二维线框]</div>
            <svg class="plan" viewBox="84 80 875 387" fill="none">
              <path d="M382.500 141v239M470.500 141v239M576.500 141v239M351 173.500h258M351 347.500h258" stroke="#a32222"/>
              <path d="M379.500 169.500h201v181.500h-114v-87.500h-87zM387.500 177.500h185v166h-98v-87h-87z" stroke="#c4c4c4"/>
            </svg>
            <svg class="ucs" viewBox="0 0 60 56" fill="none" stroke="#bbb">
              <path d="M5.500 12v40M5 50.500h38M2.500 46.500h6v6h-6z"/>
              <path d="M7 1l4 5 4-5M11 6v5M45 39l9 9M54 39l-9 9"/>
            </svg>
            <div class="viewcube">
              <svg class="cube" viewBox="0 0 76 76">
                <circle cx="38" cy="38" r="29" fill="none" stroke="#303030" stroke-width="6"/>
                <path d="M24 24h28v28H24z" fill="#a9a9a9"/><path d="M28 28h20v20H28z" fill="#9c9ea2"/>
                <g fill="#b5b5b5" font-family="Liberation Sans, Noto Sans CJK SC, sans-serif" font-size="11" text-anchor="middle">
                  <text x="38" y="12">北</text><text x="38" y="73">南</text><text x="8" y="43">西</text><text x="68" y="43">东</text>
                  <text x="38" y="44" font-size="17" fill="#333a44">上</text>
                </g>
              </svg>
              <button class="wcs" type="button">WCS<svg viewBox="0 0 8 6"><path d="M1 1h6L4 5z" fill="#a9abb6"/></svg></button>
            </div>
          </div>
          <div class="vscroll">
            <span class="sbtn"><svg viewBox="0 0 11 11"><path d="M3 7l2.500-3L8 7"/></svg></span>
            <span class="sthumb"></span>
            <span class="sbtn end"><svg viewBox="0 0 11 11"><path d="M3 4l2.500 3L8 4"/></svg></span>
          </div>
          <div class="tabs">
            <svg class="nav" viewBox="0 0 44 11"><path d="M.5 0v11M11.500 0v11M22.500 0v11M33.500 0v11" stroke="#c8c4b4"/><path d="M9 2v7L5 5.500zM19 2v7l-4-3.500zM26 2v7l4-3.500zM36 2v7l4-3.500z" fill="#9a978c"/><path d="M4 2v7M41 2v7" stroke="#9a978c"/></svg>
            <button class="tab on" type="button">模型</button>
            <button class="tab" type="button">布局1</button>
            <button class="tab" type="button">布局2</button>
            <div class="hscroll">
              <span class="sbtn"><svg viewBox="0 0 11 11"><path d="M7 3L4 5.500 7 8"/></svg></span>
              <span class="sthumb end"></span>
              <span class="sbtn"><svg viewBox="0 0 11 11"><path d="M4 3l3 2.500L4 8"/></svg></span>
            </div>
          </div>
          <div class="corner"></div>
        </section>

        <div class="vbars right">
          <div class="vgrip"></div>
          <div class="vtools">
            <svg><use href="#erase"/></svg><svg><use href="#copy"/></svg><svg><use href="#mirror"/></svg><svg><use href="#offset"/></svg><svg><use href="#array"/></svg><svg><use href="#move"/></svg><svg><use href="#rotate"/></svg><svg><use href="#scale"/></svg><svg><use href="#stretch"/></svg><svg><use href="#trim"/></svg><svg><use href="#extend"/></svg><svg><use href="#brkpt"/></svg><svg><use href="#brk"/></svg><svg><use href="#join"/></svg><svg><use href="#chamfer"/></svg><svg><use href="#fillet"/></svg><svg><use href="#blend"/></svg><svg><use href="#explode"/></svg>
          </div>
          <div class="vgrip"></div>
          <div class="vtools last">
            <svg><use href="#front"/></svg><svg><use href="#back"/></svg><svg><use href="#above"/></svg><svg><use href="#under"/></svg><i class="hsep"></i><svg viewBox="0 0 16 16"><text x="1" y="7" font-size="6" font-weight="700" fill="#333">ABC</text><path d="M5 9v4h5M11 8l3 1v4" fill="none" stroke="#555"/><path d="M15 12v3h-3z"/></svg><svg><use href="#hatchback"/></svg>
          </div>
        </div>
      </div>

      <section class="command">
        <div class="cmd-side">
          <svg viewBox="0 0 15 38"><path d="M2 4h11M2 6h11" stroke="#bbb" stroke-dasharray="1 1"/><path d="M4.500 12.500l5 6M9.500 12.500l-5 6" stroke="#fff" stroke-width="1.600"/><path d="M3 29c0-2 2-3 3-2l-1 2 1 1 2-1c1 1 0 2 0 3l4 4-1.500 1.500-4-4c-2 0-4-1-3.500-4.500z" fill="#fff"/></svg>
        </div>
        <div class="cmd-main">
          <div class="cmd-log">命令: *取消*</div>
          <div class="cmd-line">
            <svg class="prompt" viewBox="0 0 12 12"><path d="M.5 1h11v10H.5z" fill="#e9edf4" stroke="#aab"/><path d="M2.500 3.500L5 6 2.500 8.500M6 9h3" fill="none" stroke="#345"/></svg>
            <span class="caret dim"></span>
            <input type="text" placeholder="键入命令" aria-label="命令行">
          </div>
        </div>
      </section>
    </div>
  </main>

  <footer class="status">
    <span>标注图名比例: <code>TMBZ</code></span>
    <svg class="resize" viewBox="0 0 10 10"><path d="M7 1h2v2H7zM4 4h2v2H4zM7 4h2v2H7zM1 7h2v2H1zM4 7h2v2H4zM7 7h2v2H7z" fill="#ccc"/></svg>
  </footer>

  <svg class="pointers" viewBox="0 0 190 265" aria-hidden="true">
    <path d="M54 16l14-3-1 3.500L187 53 66 22l-1 4z" fill="#f23a30"/>
    <path d="M55 261l7-15 2 3.500L158 189 69 255l2 4z" fill="#f23a30"/>
  </svg>
  <svg class="mark" viewBox="0 0 180 86" aria-hidden="true">
    <g fill="#fff" fill-opacity=".72">
      <ellipse cx="67" cy="23" rx="6.500" ry="8.500"/><ellipse cx="80" cy="10" rx="6" ry="8.500"/><ellipse cx="96" cy="11" rx="6.500" ry="8.500" transform="rotate(10 96 11)"/><ellipse cx="106" cy="26" rx="6.500" ry="8.500"/>
      <path d="M86 24c8 0 10 10 17 16 7 8 1 18-9 16-5-1-11-1-16 0-10 2-16-8-9-16 7-6 9-16 17-16z"/>
    </g>
    <g font-family="Liberation Sans, Noto Sans CJK SC, sans-serif" font-weight="700" fill="#fff" fill-opacity=".85" stroke="#999" stroke-opacity=".6" stroke-width=".8">
      <text x="0" y="56" font-size="38">Bai</text>
      <text x="72" y="50" font-size="23" fill="#888" stroke="#fff">du</text>
      <text x="115" y="54" font-size="30">经验</text>
    </g>
    <text x="2" y="79" font-family="Open Sans, Liberation Sans, sans-serif" font-size="21" fill="#fff" fill-opacity=".85" stroke="#aaa" stroke-opacity=".6" stroke-width=".8">jingyan.baidu.com</text>
  </svg>
  <div class="bubble">60</div>
</div>
</body>
</html>
```

FILE: styles.css
```css
* { box-sizing: border-box; }

body {
  margin: 0;
  background: #5f5f5f;
  color: #222;
  font-family: "Liberation Sans", "Noto Sans CJK SC", sans-serif;
  font-size: 10px;
  line-height: 12px;
  overflow: hidden;
}

button {
  display: flex;
  align-items: center;
  border: 0;
  padding: 0;
  background: none;
  color: inherit;
  font: inherit;
}

input, select { font: inherit; color: inherit; }
svg { display: block; flex: none; }
.sprite { position: absolute; width: 0; height: 0; }
.ico { width: 16px; height: 16px; }

.app {
  position: relative;
  display: flex;
  flex-direction: column;
  min-height: 100vh;
  overflow: hidden;
  border-left: 1px solid #444;
  border-bottom: 2px solid #444;
}

.caret {
  flex: none;
  width: 8px;
  height: 3px;
  background: #333;
  clip-path: polygon(25% 0, 75% 0, 50% 100%);
}
.caret.big { height: 4px; clip-path: polygon(10% 0, 90% 0, 50% 100%); background: #111; }
.caret.dim { background: #999; }

/* title bar */
.titlebar {
  display: flex;
  gap: 4px;
  padding: 3px 5px 0 2px;
  border-top: 1px solid #3c3c3c;
  border-bottom: 1px solid #3f3f3f;
  background: linear-gradient(#989898, #7e7e7e 50%, #585858);
}
.logo {
  width: 30px;
  height: 31px;
  padding-left: 2px;
  border: 1px solid #262626;
  background: linear-gradient(#b5b5b5, #6d6d6d);
}
.logo-mark { width: 18px; height: 20px; }
.title-main { flex: 1; min-width: 0; }
.title-row, .menu-row { display: flex; justify-content: space-between; align-items: center; }
.title-row { height: 16px; }
.menu-row { height: 17px; }
.quick { display: flex; align-items: center; gap: 2px; }
.quick .caret { margin: 0 -1px; }
.doc { margin: 0; color: #f2f2f2; font-size: 10px; font-weight: 400; }
.info { display: flex; align-items: center; gap: 2px; }
.play { width: 4px; height: 7px; margin-right: 2px; background: #111; clip-path: polygon(0 0, 100% 50%, 0 100%); }
.search {
  width: 132px;
  height: 16px;
  padding: 0 2px;
  border: 1px solid #777;
  background: #fff;
  font-size: 8px;
  font-style: italic;
}
.search::placeholder, .cmd-line input::placeholder { color: #777; opacity: 1; }
.info .login { gap: 1px; color: #eee; font-size: 9px; }
.info .gap { margin-left: 40px; }
.helpbtn { margin-left: 8px; }
.info .winbtns { margin-left: 12px; }
.winbtns { display: flex; gap: 4px; padding-right: 1px; }
.winbtns svg { width: 8px; height: 8px; }
.menu { display: flex; padding-left: 5px; }
.menu a { width: 47px; color: #f0f0f0; text-decoration: none; white-space: nowrap; }

/* combo boxes */
.combo { display: grid; flex: none; height: 16px; align-items: center; }
.combo > * { grid-area: 1 / 1; }
.combo select {
  appearance: none;
  width: 100%;
  height: 16px;
  padding: 0 14px 0 3px;
  border: 1px solid #8a97a8;
  border-radius: 0;
  background: #fff;
  color: #000;
  font-family: "Liberation Mono", "Noto Sans CJK SC", monospace;
  font-size: 8px;
}
.combo select:disabled { background: #ece9d8; color: #aaa79a; opacity: 1; }
.chev {
  justify-self: end;
  width: 11px;
  height: 12px;
  margin-right: 2px;
  background: linear-gradient(#dbe6fd, #b2c8f4);
  pointer-events: none;
}
.chev path, .sbtn path { fill: none; stroke: #2c4470; stroke-width: 2; }
.combo select:disabled ~ .chev { background: #e6e3d4; }
.combo select:disabled ~ .chev path { stroke: #c5c2b4; }
.combo.inset select { padding-left: 12px; }
.combo-title { width: 132px; margin-left: 2px; }
.combo-title select { padding-left: 14px; border-color: #555; background: linear-gradient(#e4e4e4, #bdbdbd); }
.combo-title .ico { width: 14px; }
.combo-title .caret { justify-self: end; margin-right: 2px; }
.quick .combo-title + .caret { margin-left: 1px; }
.w-style { width: 88px; }
.w-space { width: 129px; }
.w-space select { padding-left: 6px; }
.w-layers { width: 219px; }
.w-layers select { padding-left: 60px; }
.layer-state { display: flex; align-items: center; padding-left: 2px; pointer-events: none; }
.layer-state svg { width: 12px; height: 14px; }
.swatch { width: 8px; height: 8px; border: 1px solid #222; background: #fff; pointer-events: none; }
.w-color { width: 111px; }
.w-color select { padding-left: 13px; }
.w-color .swatch { margin-left: 4px; }
.w-ltype { width: 119px; }
.w-ltype select { padding-left: 51px; }
.w-lweight { width: 92px; }
.w-lweight select { padding-left: 32px; }
.rule { width: 44px; height: 1px; margin-left: 4px; background: #222; pointer-events: none; }
.w-lweight .rule { width: 26px; }
.w-plot { width: 88px; }
.w-plot select { padding-left: 6px; }

/* toolbars */
.bar { display: flex; padding-left: 2px; margin-bottom: 4px; }
.grip { flex: none; width: 6px; height: 16px; border: 1px solid #555; background: #444; }
.tools {
  display: flex;
  flex: none;
  align-items: center;
  gap: 1px;
  height: 16px;
  margin-right: 2px;
  background: #f0f0f0;
}
.w-std { width: 466px; }
.w-std .caret { margin-top: -2px; }
.sep { width: 1px; height: 13px; margin: 0 1px; background: #ccc; }
.mid { margin: 0 2px; }
.tools.props { gap: 3px; }

/* body */
.body { display: flex; flex: 1; min-height: 0; padding: 0 3px 1px 2px; }
.palette {
  display: flex;
  flex-direction: column;
  flex: none;
  width: 56px;
  margin-bottom: 1px;
  padding-bottom: 4px;
  border-radius: 3px;
  background: #f1f0ed;
  color: #111;
  font-size: 9px;
}
.palette-head {
  display: flex;
  align-items: center;
  gap: 4px;
  height: 17px;
  padding: 0 4px;
  border-radius: 3px 3px 0 0;
  background: linear-gradient(#a8a8a8, #858585);
  color: #111;
  font-size: 10px;
  font-weight: 700;
}
.palette-head i { width: 3px; height: 10px; background: #666; }
.group { display: flex; flex-direction: column; flex-basis: 0; }
.group + .group { padding-top: 2px; margin-top: 2px; border-top: 1px solid #bab7a8; }
.group button { flex: 1 1 0; gap: 2px; width: 100%; padding-left: 1px; line-height: 12px; white-space: nowrap; }
.group button svg { width: 14px; height: 12px; }
.group .wide { width: 36px; text-align-last: justify; }
.g11 { flex-grow: 11; padding-top: 3px; background: #ece9da; }
.g6 { flex-grow: 6; }
.g4 { flex-grow: 4; }
.g3 { flex-grow: 3; }
.g2 { flex-grow: 2; }
.group .hot { background: #fdf8a2; }
.dots { display: flex; align-items: center; gap: 1px; }
.dots i { width: 4px; height: 4px; margin-top: 4px; border: 1px solid #333; border-radius: 50%; }

.work { display: flex; flex: 1; flex-direction: column; min-width: 0; gap: 3px; padding-left: 2px; }
.stage { display: flex; flex: 1; min-height: 0; gap: 3px; }
.vbars {
  display: flex;
  flex: none;
  flex-direction: column;
  align-self: flex-start;
  width: 18px;
  border: 1px solid #444;
  border-top: 0;
}
.vbars.left { margin-right: 1px; }
.vbars.right { align-self: stretch; margin-right: 3px; height: 0; min-height: 100%; overflow: hidden; }
.vgrip { flex: none; height: 6px; border: 1px solid #666; background: #333; }
.vtools { display: flex; flex: none; flex-direction: column; align-items: center; padding: 0 0 1px; background: #efefef; }
.vtools svg { width: 15px; height: 16px; }
.hsep { width: 14px; height: 1px; margin: 2px 0; background: #aaa; }

.frame {
  display: grid;
  flex: 1;
  grid-template: minmax(0, 1fr) 12px / minmax(0, 1fr) 13px;
  min-width: 0;
  border: 1px solid #c9c5b0;
}
.canvas { position: relative; background: #000; }
.view-label { padding: 2px 2px; color: #d8d8d8; font-family: "Noto Sans CJK SC", sans-serif; }
.plan { position: absolute; inset: 0; width: 100%; height: 100%; }
.ucs { position: absolute; left: 5px; bottom: 5px; width: 60px; height: 56px; }
.viewcube { position: absolute; top: 6px; right: 7px; display: flex; flex-direction: column; align-items: center; gap: 10px; }
.cube { width: 76px; height: 76px; }
.wcs {
  gap: 4px;
  height: 12px;
  padding: 0 2px;
  border: 1px solid #a0a2ac;
  border-radius: 3px;
  background: #82848f;
  color: #3f4148;
  font-size: 8px;
}
.wcs svg { width: 8px; height: 6px; }
.vscroll { display: flex; flex-direction: column; align-items: center; background: #fcfcf4; border-left: 1px solid #ddd; }
.sbtn { width: 11px; height: 11px; border-radius: 2px; background: linear-gradient(#dbe6fd, #b2c8f4); }
.sthumb { width: 11px; height: 11px; margin: 1px; border: 1px solid #b2c8f4; border-radius: 2px; background: #c9d8fa; }
.sbtn.end { margin-top: auto; }
.tabs { display: flex; align-items: stretch; background: #ece9d8; }
.nav { width: 44px; height: 11px; }
.tab {
  padding: 0 7px 0 4px;
  background: linear-gradient(to bottom right, transparent 44%, #555 45% 55%, transparent 56%) right / 6px 100% no-repeat;
  font-size: 9px;
  line-height: 11px;
}
.tab.on { padding: 0 7px 0 6px; background: #000; color: #fff; clip-path: polygon(0 0, 100% 0, calc(100% - 5px) 100%, 5px 100%); }
.hscroll { display: flex; align-items: center; width: 34%; margin-left: auto; padding-left: 3px; border-left: 1px solid #aaa; background: #fcfcf4; }
.hscroll .end { margin-left: auto; }
.corner { background: #ece9d8; }

/* command window */
.command { display: flex; height: 38px; border: 1px solid #444; }
.cmd-side { width: 16px; background: linear-gradient(90deg, #4c4c4c, #6a6a6a); }
.cmd-side svg { width: 15px; height: 36px; }
.cmd-main { display: flex; flex: 1; flex-direction: column; }
.cmd-log {
  flex: 1;
  padding: 6px 2px 0;
  border-bottom: 1px solid #888;
  background: #c8c8c8;
  font-family: "Liberation Mono", "Noto Sans CJK SC", monospace;
}
.cmd-line { display: flex; align-items: center; gap: 2px; height: 16px; padding-left: 3px; background: #fff; }
.prompt { width: 12px; height: 12px; }
.cmd-line input { flex: 1; height: 14px; padding: 0 2px; border: 0; outline: 0; font-size: 9px; font-style: italic; }

.status {
  display: flex;
  justify-content: space-between;
  align-items: center;
  height: 17px;
  padding: 0 4px 0 7px;
  border-top: 1px solid #444;
  background: linear-gradient(#8f8f8f, #747474);
  color: #000;
  font-size: 9px;
}
.status code { font-family: "Liberation Mono", monospace; font-size: 8px; }
.resize { width: 10px; height: 10px; }

/* overlays */
.pointers { position: absolute; left: -1px; top: 220px; width: 190px; height: 265px; pointer-events: none; }
.mark { position: absolute; right: 52px; bottom: 20px; width: 180px; height: 86px; pointer-events: none; }
.bubble {
  position: absolute;
  right: -20px;
  bottom: 97px;
  width: 33px;
  height: 33px;
  padding-left: 2px;
  border: 2px solid #e4f3e4;
  border-radius: 50%;
  background: linear-gradient(#6ccf70, #2fa53c);
  color: #fff;
  font-size: 9px;
  font-weight: 700;
  line-height: 29px;
}
```
